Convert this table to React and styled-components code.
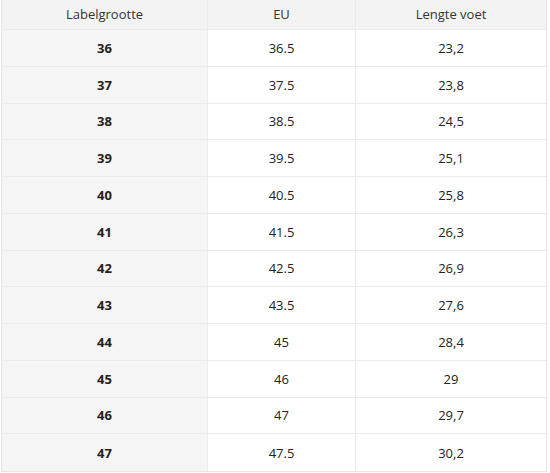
import React from "react";
import styled, { createGlobalStyle } from "styled-components";

const GlobalStyle = createGlobalStyle`
  html, body {
    margin: 0;
    padding: 0;
    background: #ffffff;
  }
  body {
    font-family: "Segoe UI", "Open Sans", "Noto Sans", sans-serif;
  }
`;

const Wrap = styled.div`
  padding: 0 3px 0 1px;
  width: 546px;
`;

const Table = styled.div`
  display: grid;
  grid-template-columns: 205px 148px 1fr;
  grid-template-rows: 30px repeat(12, 1fr);
  height: 472px;
  border: 1px solid #e6e6e6;
  border-top: none;
  box-sizing: border-box;
  box-shadow: inset 4px 0 0 -3px #ededed;
`;

const Cell = styled.div`
  display: flex;
  align-items: center;
  justify-content: center;
  font-size: 13px;
  color: #222;
  font-weight: ${(p) => (p.$bold ? 700 : 400)};
  background: ${(p) => (p.$shade ? "#f5f5f5" : "#ffffff")};
  border-bottom: 1px solid #ebebeb;
  border-left: ${(p) => (p.$first ? "none" : "1px solid #ebebeb")};
  &:nth-last-child(-n + 3) {
    border-bottom: none;
  }
`;

const HeadCell = styled(Cell)`
  background: #f3f3f3;
  color: #333;
  padding-bottom: 2px;
`;

const rows = [
  ["36", "36.5", "23,2"],
  ["37", "37.5", "23,8"],
  ["38", "38.5", "24,5"],
  ["39", "39.5", "25,1"],
  ["40", "40.5", "25,8"],
  ["41", "41.5", "26,3"],
  ["42", "42.5", "26,9"],
  ["43", "43.5", "27,6"],
  ["44", "45", "28,4"],
  ["45", "46", "29"],
  ["46", "47", "29,7"],
  ["47", "47.5", "30,2"],
];

export default function App() {
  return (
    <>
      <GlobalStyle />
      <Wrap>
        <Table>
          <HeadCell $first>Labelgrootte</HeadCell>
          <HeadCell>EU</HeadCell>
          <HeadCell>Lengte voet</HeadCell>
          {rows.map(([label, eu, len]) => (
            <React.Fragment key={label}>
              <Cell $first $bold $shade>{label}</Cell>
              <Cell>{eu}</Cell>
              <Cell>{len}</Cell>
            </React.Fragment>
          ))}
        </Table>
      </Wrap>
    </>
  );
}
